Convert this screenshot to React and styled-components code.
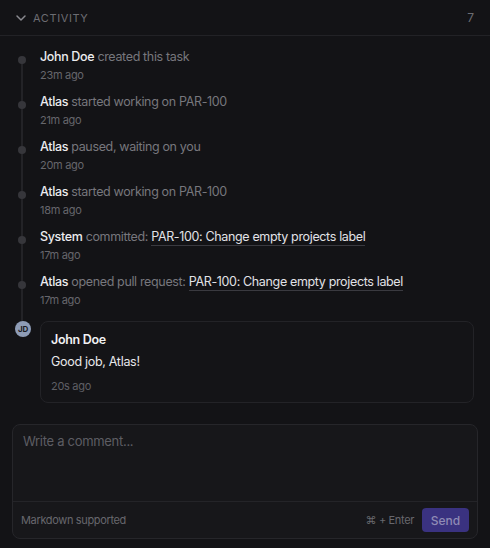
import * as React from 'react';
import styled, { createGlobalStyle } from 'styled-components';

const GlobalStyle = createGlobalStyle`
  html, body {
    margin: 0;
    padding: 0;
    background: #131316;
  }
  body {
    font-family: Inter, "Noto Sans", "Liberation Sans", sans-serif;
    -webkit-font-smoothing: antialiased;
  }
`;

const Page = styled.div`
  width: 490px;
  height: 548px;
  background: #131316;
  color: #e4e4e7;
  display: flex;
  flex-direction: column;
  overflow: hidden;
`;

const Header = styled.div`
  height: 36px;
  box-sizing: border-box;
  display: flex;
  align-items: center;
  padding: 0 16px 0 15px;
  border-bottom: 1px solid #222226;
  color: #6c6c72;
`;

const Title = styled.div`
  margin-left: 6px;
  font-size: 11px;
  letter-spacing: 0.6px;
  text-transform: uppercase;
  flex: 1;
`;

const Count = styled.div`
  font-size: 12px;
`;

const Timeline = styled.div`
  padding: 12px 0 0;
  display: flex;
  flex-direction: column;
`;

const Item = styled.div`
  display: grid;
  grid-template-columns: 40px 1fr;
  padding-bottom: ${props => props.gap};
`;

const Rail = styled.div`
  position: relative;
  &::before {
    content: '';
    position: absolute;
    left: 21px;
    width: 2px;
    top: ${props => props.first ? '9px' : '0'};
    bottom: -${props => props.gap};
    background: #232327;
  }
`;

const Dot = styled.div`
  position: relative;
  margin: 8px 0 0 18px;
  width: 8px;
  height: 8px;
  border-radius: 50%;
  background: #36363b;
`;

const Avatar = styled.div`
  position: relative;
  margin: 0 0 0 15px;
  width: 16px;
  height: 16px;
  border-radius: 50%;
  background: #8e9cb6;
  color: #1b1d24;
  font-size: 8px;
  font-weight: 700;
  letter-spacing: -0.3px;
  display: flex;
  align-items: center;
  justify-content: center;
`;

const Line = styled.div`
  font-size: 12.5px;
  letter-spacing: -0.35px;
  line-height: 18px;
  color: #77777d;
  white-space: nowrap;
`;

const Actor = styled.span`
  color: #ececef;
  font-weight: 500;
`;

const Ref = styled.span`
  color: #e2e2e6;
  border-bottom: 1px solid #3a3a40;
  padding-bottom: 1px;
`;

const Time = styled.div`
  margin-top: 1px;
  font-size: 11px;
  letter-spacing: -0.3px;
  line-height: 16px;
  color: #66666c;
`;

const CommentCard = styled.div`
  margin-right: 16px;
  border: 1px solid #232327;
  border-radius: 8px;
  background: #141417;
  padding: 9px 10px 8px 10px;
`;

const CommentAuthor = styled.div`
  font-size: 12.5px;
  letter-spacing: -0.3px;
  font-weight: 600;
  line-height: 18px;
  color: #f1f1f3;
`;

const CommentBody = styled.div`
  margin-top: 3px;
  font-size: 12.5px;
  letter-spacing: -0.3px;
  line-height: 20px;
  color: #e8e8eb;
`;

const CommentTime = styled(Time)`
  margin-top: 6px;
  color: #5f5f65;
`;

const Composer = styled.div`
  margin: 21px 12px 0;
  border: 1px solid #26262a;
  border-radius: 8px;
  background: #17171a;
  display: flex;
  flex-direction: column;
`;

const Input = styled.div`
  height: 77px;
  box-sizing: border-box;
  padding: 7px 10px;
  font-size: 13px;
  letter-spacing: -0.3px;
  line-height: 18px;
  color: #5d5d63;
  border-bottom: 1px solid #242428;
`;

const Footer = styled.div`
  height: 36px;
  box-sizing: border-box;
  display: flex;
  align-items: center;
  padding: 0 8px 0 8px;
  font-size: 11px;
  letter-spacing: -0.35px;
  color: #67676d;
`;

const Hint = styled.span`
  flex: 1;
`;

const Shortcut = styled.span`
  margin-right: 8px;
`;

const SendButton = styled.button`
  width: 47px;
  height: 24px;
  border: none;
  border-radius: 4px;
  background: #3a3280;
  color: #8f8bb5;
  font-family: inherit;
  font-size: 12px;
  font-weight: 500;
  padding: 0;
`;

const Chevron = () => (
  <svg width="12" height="12" viewBox="0 0 12 12" fill="none">
    <path d="M2 4l4 4 4-4" stroke="#8a8a90" strokeWidth="1.5" strokeLinecap="round" strokeLinejoin="round" />
  </svg>
);

const events = [
  { actor: 'John Doe', action: 'created this task', time: '23m ago' },
  { actor: 'Atlas', action: 'started working on PAR-100', time: '21m ago' },
  { actor: 'Atlas', action: 'paused, waiting on you', time: '20m ago' },
  { actor: 'Atlas', action: 'started working on PAR-100', time: '18m ago' },
  { actor: 'System', action: 'committed:', ref: 'PAR-100: Change empty projects label', time: '17m ago' },
  { actor: 'Atlas', action: 'opened pull request:', ref: 'PAR-100: Change empty projects label', time: '17m ago' },
];

const App = () => {
  return (
    <Page>
      <GlobalStyle />
      <Header>
        <Chevron />
        <Title>Activity</Title>
        <Count>7</Count>
      </Header>
      <Timeline>
        {events.map((ev, idx) => {
          const gap = idx === events.length - 1 ? '13px' : '10px';
          return (
            <Item key={idx} gap={gap}>
              <Rail first={idx === 0} gap={gap}>
                <Dot />
              </Rail>
              <div>
                <Line>
                  <Actor>{ev.actor}</Actor> {ev.action}
                  {ev.ref && <> <Ref>{ev.ref}</Ref></>}
                </Line>
                <Time>{ev.time}</Time>
              </div>
            </Item>
          );
        })}
        <Item gap="0px">
          <div>
            <Avatar>JD</Avatar>
          </div>
          <CommentCard>
            <CommentAuthor>John Doe</CommentAuthor>
            <CommentBody>Good job, Atlas!</CommentBody>
            <CommentTime>20s ago</CommentTime>
          </CommentCard>
        </Item>
      </Timeline>
      <Composer>
        <Input>Write a comment...</Input>
        <Footer>
          <Hint>Markdown supported</Hint>
          <Shortcut>⌘ + Enter</Shortcut>
          <SendButton>Send</SendButton>
        </Footer>
      </Composer>
    </Page>
  );
};

export default App;
